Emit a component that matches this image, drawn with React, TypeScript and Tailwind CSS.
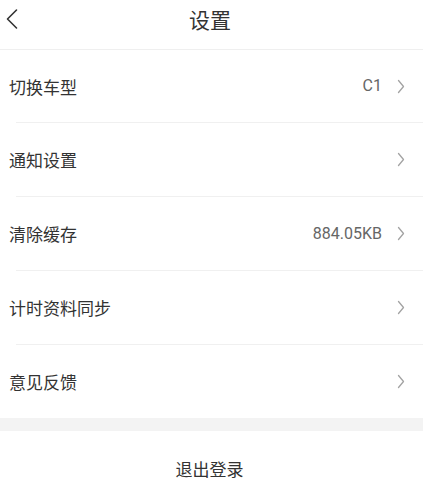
import React from "react";

const font = { fontFamily: '"Noto Sans CJK SC", "Noto Sans", sans-serif' };

function Chevron() {
  return (
    <svg width="8" height="15" viewBox="0 0 8 15" className="shrink-0">
      <path d="M1.5 1.5 L6.5 7.5 L1.5 13.5" fill="none" stroke="#a3a3a3" strokeWidth="1.3" strokeLinecap="round" strokeLinejoin="round" />
    </svg>
  );
}

const rows: { label: string; value?: string; h: string }[] = [
  { label: "切换车型", value: "C1", h: "h-[72px]" },
  { label: "通知设置", h: "h-[73px]" },
  { label: "清除缓存", value: "884.05KB", h: "h-[73px]" },
  { label: "计时资料同步", h: "h-[73px]" },
  { label: "意见反馈", h: "h-[73px]" },
];

export default function App() {
  return (
    <div className="w-[423px] h-[500px] bg-white overflow-hidden" style={font}>
      <div className="relative h-[50px] flex items-start justify-center pt-[9px] border-b border-[#efefef]">
        <svg width="14" height="22" viewBox="0 0 14 22" className="absolute left-[5px] top-[8px]">
          <path d="M11.5 2 L2.5 11 L11.5 20" fill="none" stroke="#333" strokeWidth="1.6" strokeLinecap="round" strokeLinejoin="round" />
        </svg>
        <span className="text-[21px] text-[#333] leading-none pr-[3px]">设置</span>
      </div>
      <div className="flex flex-col">
        {rows.map((r, i) => (
          <div key={r.label} className="flex flex-col">
            <div className={`${r.h} flex items-center pl-[9px] pr-[18px]`}>
              <span className="flex-1 text-[17px] text-[#333] leading-none">{r.label}</span>
              {r.value && (
                <span className="text-[16px] text-[#666] leading-none mr-[15px]" style={{ fontFamily: 'Roboto, "Noto Sans", sans-serif' }}>
                  {r.value}
                </span>
              )}
              <Chevron />
            </div>
            {i < rows.length - 1 && <div className="ml-[16px] h-px bg-[#f0f0f0]" />}
          </div>
        ))}
      </div>
      <div className="h-[13px] bg-[#f3f3f3]" />
      <div className="h-[74px] flex items-center justify-center">
        <span className="text-[17px] text-[#333] leading-none pr-[4px]">退出登录</span>
      </div>
    </div>
  );
}
